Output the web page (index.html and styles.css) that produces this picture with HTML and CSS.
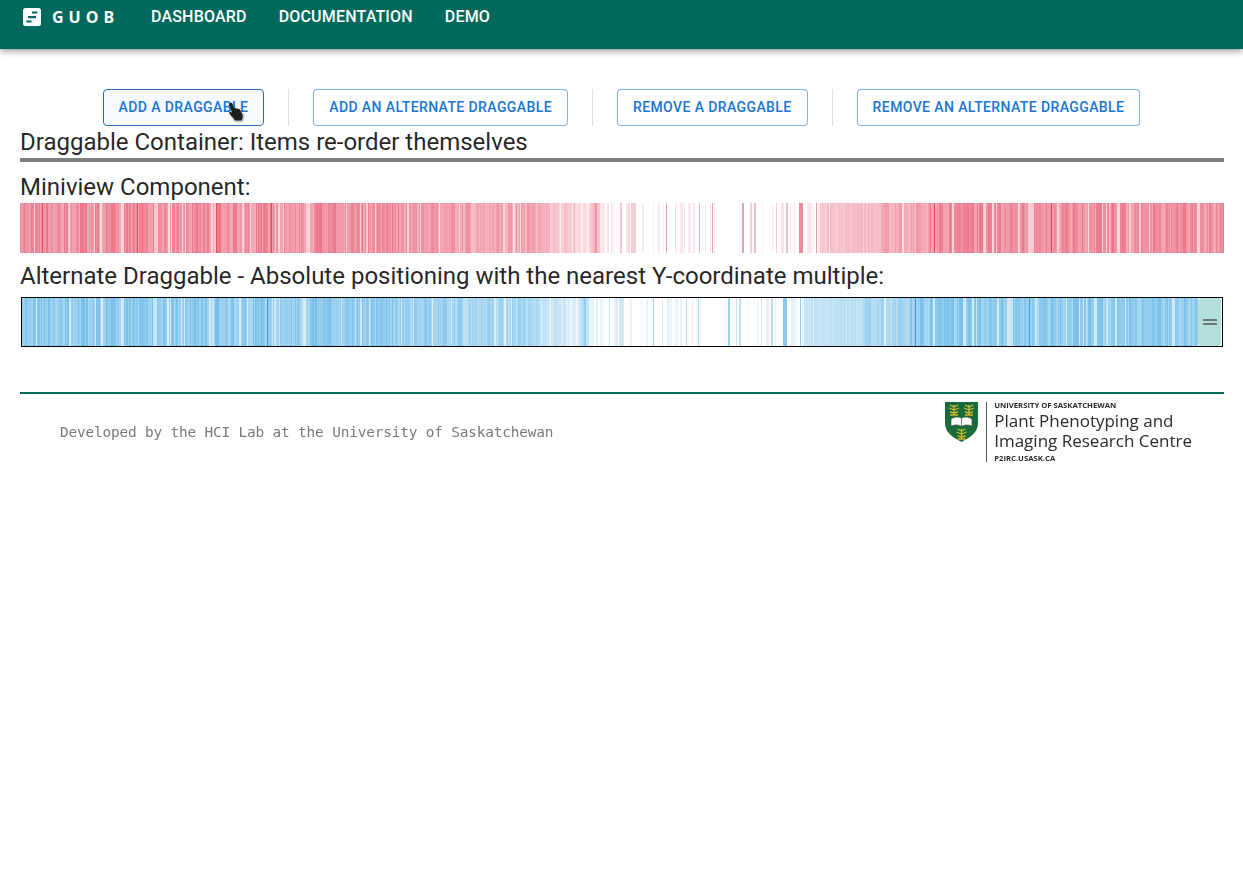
FILE: index.html
```html
<!DOCTYPE html>
<html lang="en">
<head>
  <meta charset="UTF-8">
  <title>GUOB</title>
  <link rel="stylesheet" href="styles.css">
</head>
<body>
  <header class="appbar">
    <a class="brand">
      <svg class="brand-icon" viewBox="0 0 18 18">
        <rect width="18" height="18" rx="2.5" fill="#fff"/>
        <path d="M9 3.400h5.400v2.200H9zM5 8h8v2.200H5zM3.400 12.400h5.200v2.200H3.400z" fill="#00695c"/>
      </svg>
      <span class="brand-name">GUOB</span>
    </a>
    <nav class="nav">
      <a>Dashboard</a>
      <a>Documentation</a>
      <a>Demo</a>
    </nav>
  </header>

  <main class="content">
    <div class="actions">
      <button class="btn btn-hover">Add a draggable
        <svg class="hand" viewBox="0 0 18 20">
          <path d="M3 1.200c1-.8 2.100-.3 2.500.7L7 6.400l.5-.3c.8-.3 1.500 0 1.800.6.7-.4 1.500-.2 1.800.5.800-.4 1.600-.1 1.900.6l2.400 4.400c.6 2 .2 4.200-.8 6.300H7.600l-1-2.300C5 14.600 3.400 13 2.400 11.400c-.6-1 .4-2.100 1.500-1.500l1.200.8L2.300 3c-.1-.7.2-1.300.7-1.800z" fill="#1f1f21"/>
        </svg>
      </button>
      <span class="divider"></span>
      <button class="btn">Add an alternate draggable</button>
      <span class="divider"></span>
      <button class="btn">Remove a draggable</button>
      <span class="divider"></span>
      <button class="btn">Remove an alternate draggable</button>
    </div>

    <h2 class="title">Draggable Container: Items re-order themselves</h2>
    <hr class="rule">

    <h2 class="title title-mini">Miniview Component:</h2>
    <canvas class="track" width="1204" height="50" data-rgb="228,60,88" data-line="236,58,62" data-lines="42,137,216,271,934,1051"></canvas>

    <h2 class="title title-alt">Alternate Draggable - Absolute positioning with the nearest Y-coordinate multiple:</h2>
    <div class="alt-box">
      <canvas class="track" width="1176" height="48" data-rgb="60,165,225" data-line="48,135,205" data-lines="271,934,1051"></canvas>
      <div class="handle"><span class="handle-lines"></span></div>
    </div>
  </main>

  <footer class="footer">
    <p class="credit">Developed by the HCI Lab at the University of Saskatchewan</p>
    <div class="p2irc">
      <svg class="crest" viewBox="0 0 33 40">
        <path d="M0 0h33v21c0 9-7 14-16.500 19C7 35 0 30 0 21z" fill="#1a6b3c"/>
        <g fill="none" stroke="#cdb92c" stroke-width="1.300">
          <path d="M9 3v10M9 5L5 3M9 5l4-2M9 8L4 6M9 8l5-2M9 11l-4-1M9 11l4-1M5 13h8"/>
          <path d="M24 3v10M24 5l-4-2M24 5l4-2M24 8l-5-2M24 8l5-2M24 11l-4-1M24 11l4-1M20 13h8"/>
          <path d="M16.500 27v10M16.500 29l-4-2M16.500 29l4-2M16.500 32l-5-2M16.500 32l5-2M16.500 35l-4-1M16.500 35l4-1M12.500 37h8"/>
        </g>
        <path d="M6 24v-7c4-2.500 8-2.500 10.500-.5 2.500-2 6.500-2 10.500.5v7c-4-1.500-8-1.500-10.500.5C14 22.500 10 22.500 6 24z" fill="#fff" stroke="#3a3a2a" stroke-width=".6"/>
        <path d="M16.500 17v8" stroke="#555" stroke-width=".8"/>
      </svg>
      <span class="p2irc-bar"></span>
      <div class="p2irc-text">
        <span class="p2irc-small">UNIVERSITY OF SASKATCHEWAN</span>
        <span class="p2irc-big">Plant Phenotyping and<br>Imaging Research Centre</span>
        <span class="p2irc-small">P2IRC.USASK.CA</span>
      </div>
    </div>
  </footer>

  <script src="script.js"></script>
</body>
</html>
```

FILE: styles.css
```css
body {
  margin: 0;
  background: #fff;
  font-family: Roboto, "Liberation Sans", sans-serif;
  color: rgba(0, 0, 0, 0.87);
}

.appbar {
  display: flex;
  align-items: flex-start;
  height: 49px;
  padding-left: 23px;
  background: #00695c;
  color: #fff;
  box-shadow: 0 2px 4px -1px rgba(0, 0, 0, 0.2), 0 4px 5px rgba(0, 0, 0, 0.14), 0 1px 10px rgba(0, 0, 0, 0.12);
}

.brand {
  display: flex;
  align-items: center;
  height: 34px;
  width: 128px;
}

.brand-icon {
  width: 18px;
  height: 18px;
  margin-right: 11px;
}

.brand-name {
  font-family: "Open Sans", sans-serif;
  font-size: 16px;
  font-weight: 700;
  letter-spacing: 5px;
}

.nav {
  display: flex;
  gap: 32px;
}

.nav a {
  font-size: 16px;
  font-weight: 500;
  line-height: 34px;
  letter-spacing: 0.18px;
  text-transform: uppercase;
}

.content {
  padding: 40px 19px 0 20px;
}

.actions {
  display: flex;
  justify-content: center;
  padding-right: 1px;
}

.btn {
  position: relative;
  padding: 5px 15px;
  border: 1px solid rgba(25, 118, 210, 0.55);
  border-radius: 4px;
  background: #fff;
  color: #1976d2;
  font-family: inherit;
  font-size: 14px;
  font-weight: 500;
  line-height: 25px;
  letter-spacing: 0.4px;
  text-transform: uppercase;
}

.btn-hover {
  border-color: #2b6cb8;
  background: #f6f9fd;
}

.hand {
  position: absolute;
  left: 123px;
  top: 12px;
  width: 18px;
  height: 20px;
  filter: drop-shadow(1px 1px 1px rgba(0, 0, 0, 0.35));
}

.divider {
  width: 1px;
  height: 37px;
  margin: 0 24px;
  background: #e0e0e0;
}

.title {
  margin: 0;
  font-size: 24px;
  font-weight: 400;
  line-height: 32px;
}

.rule {
  height: 4px;
  margin: 0;
  border: 0;
  background: #808080;
}

.title-mini {
  margin-top: 9px;
}

.title-alt {
  margin-top: 7px;
  margin-bottom: 5px;
}

.track {
  display: block;
}

.alt-box {
  display: flex;
  height: 48px;
  margin: 0 1px;
  border: 1px solid #000;
  padding-right: 1px;
}

.handle {
  display: flex;
  flex: 1;
  align-items: center;
  justify-content: center;
  border-radius: 4px;
  background: #b2dfdb;
}

.handle-lines {
  width: 14px;
  height: 2px;
  border-top: 2px solid #6b7a78;
  border-bottom: 2px solid #6b7a78;
}

.footer {
  display: flex;
  justify-content: space-between;
  align-items: flex-start;
  height: 80px;
  margin: 45px 19px 0 20px;
  border-top: 2px solid #00695c;
  padding: 6px 32px 0 40px;
}

.credit {
  margin: 24px 0 0;
  font-family: "DejaVu Sans Mono", monospace;
  font-size: 14.400px;
  line-height: 17px;
  letter-spacing: -0.16px;
  color: #7a7a7a;
}

.p2irc {
  display: flex;
  align-items: flex-start;
}

.crest {
  width: 33px;
  height: 40px;
  margin-top: 2px;
  filter: blur(0.3px);
}

.p2irc-bar {
  width: 1px;
  height: 60px;
  margin: 2px 7px 0 8px;
  background: #555;
}

.p2irc-text {
  display: flex;
  flex-direction: column;
  padding-top: 1px;
  color: #2b2b2b;
  font-family: "Open Sans", sans-serif;
}

.p2irc-small {
  font-size: 7.700px;
  font-weight: 700;
  line-height: 8px;
}

.p2irc-big {
  margin: 2px 0 3px;
  font-size: 17px;
  line-height: 20px;
  white-space: nowrap;
}
```

FILE: script.js
```js
// stripes of the two heatmap strips, both drawn from one list of values
var TOTAL = 1204;
var seed = 4177;

function rand() {
  seed = (seed * 16807) % 2147483647;
  return seed / 2147483647;
}

// how strong the strip is around a page x
function density(x) {
  if (x < 400) return 0.6;
  if (x < 470) return 0.52;
  if (x < 550) return 0.46;
  if (x < 575) return 0.3;
  if (x < 590) return 0.2;
  if (x < 880) return 0.33;
  if (x < 930) return 0.45;
  return 0.6;
}

// sparse middle part, read off the picture: [x, width, strength]
var sparse = [
  [590, 3, 0.3], [593, 2, 0.4], [595, 2, 0.55], [597, 3, 0.3], [600, 5, 0.12], [607, 2, 0.14], [611, 2, 0.12],
  [614, 1, 0.1], [620, 2, 0.3], [626, 2, 0.14], [628, 2, 0.2], [631, 5, 0.25], [642, 2, 0.1], [653, 1, 0.08],
  [658, 2, 0.1], [663, 1, 0.08], [666, 1, 0.5], [675, 1, 0.2], [680, 3, 0.12], [684, 1, 0.14], [688, 3, 0.1],
  [693, 2, 0.12], [699, 1, 0.4], [705, 1, 0.14], [710, 1, 0.1], [712, 1, 0.5], [714, 1, 0.1],
  [739, 1, 0.08], [742, 2, 0.5], [750, 2, 0.25], [754, 2, 0.35], [762, 1, 0.08], [769, 1, 0.06], [772, 1, 0.12],
  [776, 1, 0.25], [781, 3, 0.14], [786, 2, 0.35], [790, 1, 0.1], [794, 1, 0.12], [799, 4, 0.6], [807, 3, 0.14],
  [810, 2, 0.1], [813, 1, 0.1], [816, 1, 0.55], [818, 2, 0.12]
];

var values = [];
var x = 0;
while (x < TOTAL) {
  var r = rand();
  var w = r < 0.65 ? 1 : r < 0.93 ? 2 : 3;
  var a = density(x + 20) * (0.72 + rand() * 0.46);
  if (rand() < 0.07) a *= 0.4;
  for (var i = 0; i < w && x < TOTAL; i++) {
    values[x] = a;
    x++;
  }
}

for (var p = 590 - 20; p < 820 - 20; p++) values[p] = 0;
sparse.forEach(function (s) {
  for (var i = 0; i < s[1]; i++) values[s[0] - 20 + i] = s[2];
});

document.querySelectorAll(".track").forEach(function (canvas) {
  var ctx = canvas.getContext("2d");
  var scale = TOTAL / canvas.width;
  for (var i = 0; i < canvas.width; i++) {
    ctx.fillStyle = "rgba(" + canvas.dataset.rgb + "," + values[Math.floor(i * scale)].toFixed(3) + ")";
    ctx.fillRect(i, 0, 1, canvas.height);
  }
  // thin lines that stand out
  canvas.dataset.lines.split(",").forEach(function (l) {
    ctx.fillStyle = "rgba(" + canvas.dataset.line + ",0.8)";
    ctx.fillRect(Math.round((l - 20) / scale), 0, 1, canvas.height);
  });
});
```
